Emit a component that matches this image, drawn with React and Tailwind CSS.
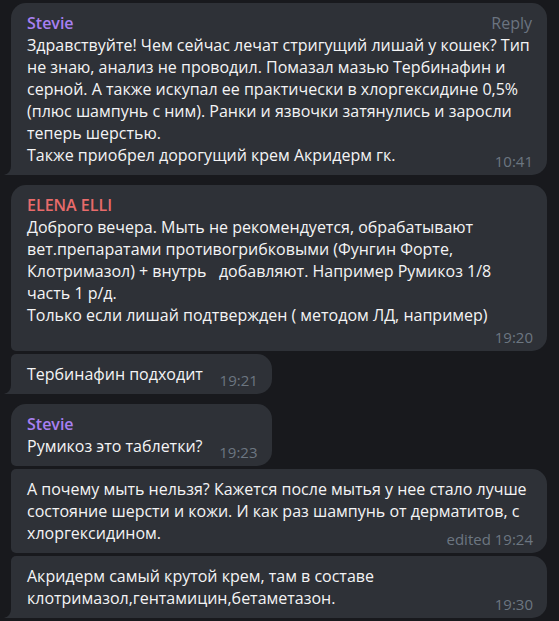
import React from 'react';

// chat thread, dark theme
const messages = [
  {
    name: 'Stevie',
    nameColor: 'text-[#a880f2]',
    reply: true,
    first: true,
    last: true,
    wide: true,
    lines: [
      'Здравствуйте! Чем сейчас лечат стригущий лишай у кошек? Тип',
      'не знаю, анализ не проводил. Помазал мазью Тербинафин и',
      'серной. А также искупал ее практически в хлоргексидине 0,5%',
      '(плюс шампунь с ним). Ранки и язвочки затянулись и заросли',
      'теперь шерстью.',
      'Также приобрел дорогущий крем Акридерм гк.',
    ],
    time: '10:41',
  },
  {
    name: 'ELENA ELLI',
    nameColor: 'text-[#e86b6b]',
    first: true,
    wide: true,
    timeRow: true,
    gap: 'mt-[10px]',
    lines: [
      'Доброго вечера. Мыть не рекомендуется, обрабатывают',
      'вет.препаратами противогрибковыми (Фунгин Форте,',
      'Клотримазол) + внутрь   добавляют. Например Румикоз 1/8',
      'часть 1 р/д.',
      'Только если лишай подтвержден ( методом ЛД, например)',
    ],
    time: '19:20',
  },
  {
    last: true,
    gap: 'mt-[3px]',
    lines: ['Тербинафин подходит'],
    time: '19:21',
    spacer: 'w-[55px]',
  },
  {
    name: 'Stevie',
    nameColor: 'text-[#a880f2]',
    first: true,
    gap: 'mt-[10px]',
    lines: ['Румикоз это таблетки?'],
    time: '19:23',
    spacer: 'w-[55px]',
  },
  {
    wide: true,
    gap: 'mt-[3px]',
    lines: [
      'А почему мыть нельзя? Кажется после мытья у нее стало лучше',
      'состояние шерсти и кожи. И как раз шампунь от дерматитов, с',
      'хлоргексидином.',
    ],
    time: 'edited 19:24',
  },
  {
    wide: true,
    last: true,
    gap: 'mt-[3px]',
    lines: ['Акридерм самый крутой крем, там в составе', 'клотримазол,гентамицин,бетаметазон.'],
    time: '19:30',
  },
];

function Tail() {
  return (
    <svg className="absolute -left-[7px] bottom-0 w-[7px] h-[9px]" viewBox="0 0 7 9">
      <path d="M7 0 Q7 7 0 9 L7 9 Z" fill="#2e3137" />
    </svg>
  );
}

function Bubble({ m }) {
  return (
    <div
      className={`relative bg-[#2e3137] pl-4 pr-[14px] py-[9px] ${m.wide ? 'w-[536px]' : 'w-fit'} ${m.gap || ''} rounded-tr-[15px] rounded-br-[15px] ${
        m.first ? 'rounded-tl-[15px]' : 'rounded-tl-[5px]'
      } ${m.last ? 'rounded-bl-none' : 'rounded-bl-[5px]'}`}
    >
      {m.last && <Tail />}
      {m.name && (
        <div className="flex items-center justify-between leading-[22px] text-[16px]">
          <span className={`font-semibold ${m.nameColor}`}>{m.name}</span>
          {m.reply && <span className="text-[#6b7480] pr-px">Reply</span>}
        </div>
      )}
      <div className="text-[16px] leading-[22px] text-[#f4f4f5] whitespace-pre">
        {m.lines.map((l, i) => (
          <div key={i}>
            {l}
            {m.spacer && i === m.lines.length - 1 && <span className={`inline-block ${m.spacer}`} />}
          </div>
        ))}
      </div>
      {m.timeRow && <div className="h-[16px]" />}
      <span className="absolute right-[14px] bottom-[5px] text-[15px] leading-[18px] text-[#6c7681]">{m.time}</span>
    </div>
  );
}

export default function App() {
  return (
    <div className="min-h-screen bg-[#18191d] pt-[3px] pl-[11px] pr-[12px] pb-[3px]" style={{ fontFamily: '"Open Sans", sans-serif' }}>
      <div className="flex flex-col items-start">
        {messages.map((m, i) => (
          <Bubble key={i} m={m} />
        ))}
      </div>
    </div>
  );
}
